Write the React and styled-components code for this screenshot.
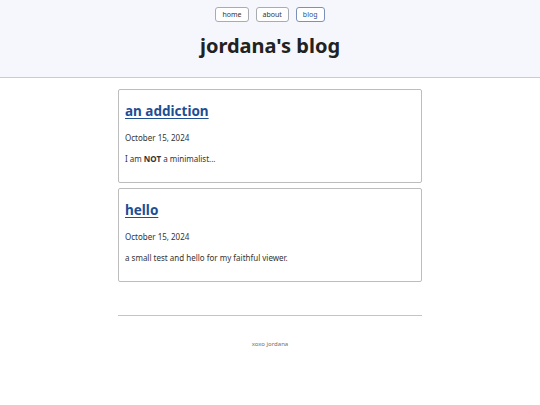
import React from "react";
import styled, { createGlobalStyle } from "styled-components";

const Global = createGlobalStyle`
  html, body { margin: 0; padding: 0; background: #ffffff; }
  body { font-family: "Noto Sans", "Open Sans", sans-serif; color: #222; }
`;

const Header = styled.header`
  background: #f5f7fd;
  border-bottom: 1px solid #c9cbd3;
  height: 78px;
  box-sizing: border-box;
  display: flex;
  flex-direction: column;
  align-items: center;
  padding-top: 7px;
`;

const Nav = styled.nav`
  display: flex;
  gap: 7px;
`;

const NavButton = styled.a`
  display: inline-flex;
  align-items: center;
  justify-content: center;
  height: 15px;
  padding: 0 6px;
  box-sizing: border-box;
  border: 1px solid ${(p) => (p.$active ? "#7d91b8" : "#a9abb2")};
  border-radius: 3px;
  background: #ffffff;
  font-size: 7px;
  color: ${(p) => (p.$active ? "#2d4f8e" : "#333")};
  text-decoration: none;
`;

const Title = styled.h1`
  margin: 12px 0 0;
  font-size: 20px;
  font-weight: 700;
  color: #222;
  line-height: 1.2;
`;

const Main = styled.main`
  width: 304px;
  margin: 11px auto 0;
  display: flex;
  flex-direction: column;
  gap: 5px;
`;

const Card = styled.article`
  border: 1px solid #bdbdbd;
  border-radius: 2px;
  height: 94px;
  box-sizing: border-box;
  padding: 9px 6px 0;
`;

const PostTitle = styled.a`
  display: inline-block;
  font-size: 13.5px;
  font-weight: 700;
  color: #1f4e93;
  text-decoration: underline;
  text-underline-offset: 2px;
  line-height: 22px;
`;

const DateLine = styled.p`
  margin: 10px 0 0;
  font-size: 8px;
  line-height: 11px;
  color: #333;
`;

const Body = styled.p`
  margin: 10px 0 0;
  font-size: 8px;
  line-height: 11px;
  color: #333;
`;

const Footer = styled.footer`
  width: 304px;
  margin: 33px auto 0;
  border-top: 1px solid #c4c4c4;
  text-align: center;
  padding-top: 24px;
  font-size: 6px;
  color: #6f6f6f;
`;

const posts = [
  {
    title: "an addiction",
    date: "October 15, 2024",
    body: (
      <>
        I am <strong>NOT</strong> a minimalist...
      </>
    ),
  },
  {
    title: "hello",
    date: "October 15, 2024",
    body: "a small test and hello for my faithful viewer.",
  },
];

export default function App() {
  return (
    <>
      <Global />
      <Header>
        <Nav>
          <NavButton href="#">home</NavButton>
          <NavButton href="#">about</NavButton>
          <NavButton href="#" $active>
            blog
          </NavButton>
        </Nav>
        <Title>jordana's blog</Title>
      </Header>
      <Main>
        {posts.map((p) => (
          <Card key={p.title}>
            <PostTitle href="#">{p.title}</PostTitle>
            <DateLine>{p.date}</DateLine>
            <Body>{p.body}</Body>
          </Card>
        ))}
      </Main>
      <Footer>xoxo jordana</Footer>
    </>
  );
}
